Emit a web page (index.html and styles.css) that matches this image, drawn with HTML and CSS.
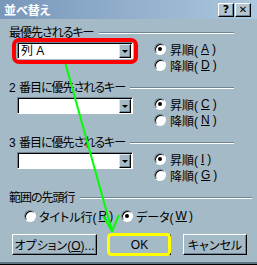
FILE: index.html
```html
<!DOCTYPE html>
<html lang="ja">
<head>
  <meta charset="UTF-8" />
  <title>並べ替え</title>
  <link rel="stylesheet" href="styles.css">
</head>
<body>

  <div class="dialog">
    <div class="titlebar">
      <span class="title">並べ替え</span>
      <span class="cbtn">?</span>
      <span class="cbtn close">✕</span>
    </div>

    <div class="body">
      <div class="group">
        <div class="legend"><span>最優先されるキー</span><i class="rule"></i></div>
        <div class="row">
          <div class="combo"><span class="value">列 A</span><span class="drop"></span></div>
          <div class="radios">
            <label class="radio on"><span class="dot"></span>昇順(<u>A</u>)</label>
            <label class="radio"><span class="dot"></span>降順(<u>D</u>)</label>
          </div>
        </div>
      </div>

      <div class="group">
        <div class="legend"><span>2 番目に優先されるキー</span><i class="rule"></i></div>
        <div class="row">
          <div class="combo"><span class="value"></span><span class="drop"></span></div>
          <div class="radios">
            <label class="radio on"><span class="dot"></span>昇順(<u>C</u>)</label>
            <label class="radio"><span class="dot"></span>降順(<u>N</u>)</label>
          </div>
        </div>
      </div>

      <div class="group">
        <div class="legend"><span>3 番目に優先されるキー</span><i class="rule"></i></div>
        <div class="row">
          <div class="combo"><span class="value"></span><span class="drop"></span></div>
          <div class="radios">
            <label class="radio on"><span class="dot"></span>昇順(<u>I</u>)</label>
            <label class="radio"><span class="dot"></span>降順(<u>G</u>)</label>
          </div>
        </div>
      </div>

      <div class="group header-row">
        <div class="legend"><span>範囲の先頭行</span><i class="rule"></i></div>
        <div class="hdr-radios">
          <label class="radio first"><span class="dot"></span>タイトル行(<u>R</u>)</label>
          <label class="radio on"><span class="dot"></span>データ(<u>W</u>)</label>
        </div>
      </div>

      <div class="buttons">
        <button class="btn options">オプション(<u>O</u>)...</button>
        <button class="btn ok">OK</button>
        <button class="btn cancel">キャンセル</button>
      </div>
    </div>

    <!-- annotations drawn over the dialog -->
    <svg class="marks" width="257" height="265" viewBox="0 0 257 265">
      <line x1="65" y1="62" x2="112" y2="231" stroke="#00ff00" stroke-width="2"/>
      <polyline points="103,216 112,231 119,215" fill="none" stroke="#00ff00" stroke-width="2"/>
      <rect x="14" y="40" width="122" height="22" rx="5" fill="none" stroke="#ff0000" stroke-width="4"/>
      <rect x="108.5" y="234.5" width="61" height="20" rx="3" fill="none" stroke="#ffff00" stroke-width="3"/>
    </svg>
  </div>

</body>
</html>
```

FILE: styles.css
```css
* {
  box-sizing: border-box;
}

body {
  margin: 0;
  font-family: "Liberation Sans", "Noto Sans CJK JP", sans-serif;
  font-size: 12px;
  font-feature-settings: "palt";
  color: #000;
}

.dialog {
  position: relative;
  width: 257px;
  height: 265px;
  background: #a5bac7;
  border-bottom: 1px solid #000;
  box-shadow: inset 0 -2px #5f7480;
  display: flex;
  flex-direction: column;
}

.titlebar {
  height: 19px;
  background: linear-gradient(to right, #7897ba, #abc8de);
  display: flex;
  align-items: center;
  padding: 0 6px 0 4px;
}

.title {
  flex: 1;
  color: #fff;
  font-weight: bold;
  font-size: 12px;
}

.cbtn {
  width: 16px;
  height: 14px;
  background: #b3c6d1;
  border: 1px solid;
  border-color: #fff #000 #000 #fff;
  box-shadow: inset -1px -1px #6f8594;
  display: flex;
  align-items: center;
  justify-content: center;
  font: bold 11px "DejaVu Sans", sans-serif;
  line-height: 1;
}

.cbtn + .cbtn {
  margin-left: 1px;
}

.close {
  font-size: 10px;
}

.body {
  padding: 7px 0 0 9px;
}

.group {
  margin-bottom: 8px;
}

.legend {
  display: flex;
  align-items: center;
  width: 225px;
  height: 14px;
  line-height: 14px;
  white-space: pre;
  letter-spacing: -1px;
  word-spacing: 2px;
}

.rule {
  flex: 1;
  height: 2px;
  margin-left: 5px;
  border-top: 1px solid #6f8594;
  border-bottom: 1px solid #fff;
}

.row {
  display: flex;
  margin-top: 1px;
}

.combo {
  margin: 1px 0 0 8px;
  width: 116px;
  height: 17px;
  background: #fff;
  border: 1px solid;
  border-color: #6f8594 #fff #fff #6f8594;
  box-shadow: inset 1px 1px #000;
  display: flex;
  padding: 1px 1px 0 1px;
}

.value {
  flex: 1;
  padding-left: 2px;
  line-height: 14px;
}

.drop {
  width: 12px;
  height: 14px;
  background: #a5bac7;
  border: 1px solid;
  border-color: #dce6ec #000 #000 #dce6ec;
  box-shadow: inset -1px -1px #6f8594;
  display: flex;
  align-items: center;
  justify-content: center;
}

.drop::after {
  content: "";
  border-left: 3px solid transparent;
  border-right: 3px solid transparent;
  border-top: 3px solid #000;
}

.radios {
  margin-left: 21px;
}

.radio {
  display: flex;
  align-items: center;
  gap: 4px;
  height: 16px;
  white-space: nowrap;
}

.radio u {
  margin: 0 -1px;
}

.dot {
  position: relative;
  width: 12px;
  height: 12px;
  border-radius: 50%;
  background: #fff;
  border: 1px solid;
  border-color: #6f8594 #fff #fff #6f8594;
  box-shadow: inset 1px 1px #000;
}

.radio.on .dot::after {
  content: "";
  position: absolute;
  left: 3px;
  top: 3px;
  width: 4px;
  height: 4px;
  border-radius: 50%;
  background: #000;
}

.header-row {
  margin-top: 2px;
  margin-bottom: 0;
}

.header-row .legend {
  width: 243px;
}

.hdr-radios {
  display: flex;
  margin-top: 3px;
  padding-left: 15px;
}

.hdr-radios .radio {
  gap: 3px;
}

.hdr-radios .first {
  width: 97px;
}

.buttons {
  display: flex;
  margin-top: 10px;
  padding-left: 3px;
}

.btn {
  height: 21px;
  padding: 0;
  font: inherit;
  color: #000;
  background: #a5bac7;
  border: 1px solid;
  border-color: #fff #000 #000 #fff;
  box-shadow: inset -1px -1px #6f8594;
}

.options {
  width: 85px;
}

.ok {
  width: 63px;
  margin-left: 11px;
}

.cancel {
  width: 64px;
  margin-left: 12px;
}

.marks {
  position: absolute;
  left: 0;
  top: 0;
  pointer-events: none;
}
```
